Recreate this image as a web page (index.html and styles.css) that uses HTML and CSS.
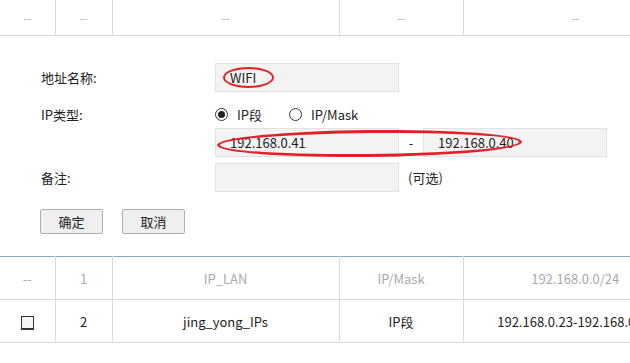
FILE: index.html
```html
<!DOCTYPE html>
<html lang="zh-CN">
<head>
  <meta charset="UTF-8" />
  <title>地址管理</title>
  <link rel="stylesheet" href="styles.css">
</head>
<body>
  <table class="grid top-grid">
    <colgroup>
      <col class="c1"><col class="c2"><col class="c3"><col class="c4"><col class="c5">
    </colgroup>
    <tr class="dim">
      <td>--</td><td>--</td><td>--</td><td>--</td><td>--</td>
    </tr>
  </table>

  <div class="form">
    <div class="row row-name">
      <span class="label">地址名称:</span>
      <div class="field"><span class="mark mark-name"></span>WIFI</div>
    </div>

    <div class="row row-type">
      <span class="label">IP类型:</span>
      <label class="radio"><span class="dot checked"></span>IP段</label>
      <label class="radio"><span class="dot"></span>IP/Mask</label>
    </div>

    <div class="row row-ip">
      <span class="label"></span>
      <div class="field">192.168.0.41</div>
      <span class="sep">-</span>
      <div class="field">192.168.0.40</div>
      <span class="mark mark-ip"></span>
    </div>

    <div class="row row-note">
      <span class="label">备注:</span>
      <div class="field"></div>
      <span class="hint">(可选)</span>
    </div>

    <div class="actions">
      <button>确定</button>
      <button>取消</button>
    </div>
  </div>

  <table class="grid list">
    <colgroup>
      <col class="c1"><col class="c2"><col class="c3"><col class="c4"><col class="c5">
    </colgroup>
    <tr class="dim">
      <td>--</td><td>1</td><td>IP_LAN</td><td>IP/Mask</td><td>192.168.0.0/24</td>
    </tr>
    <tr>
      <td><span class="check"></span></td>
      <td>2</td>
      <td>jing_yong_IPs</td>
      <td>IP段</td>
      <td>192.168.0.23-192.168.0.40</td>
    </tr>
  </table>
</body>
</html>
```

FILE: styles.css
```css
body {
  margin: 0;
  width: 630px;
  height: 363px;
  overflow: hidden;
  font-family: "Noto Sans CJK SC", "DejaVu Sans", sans-serif;
  font-size: 13px;
  color: #222;
  background: #fff;
}

.grid {
  width: 687px;
  border-collapse: collapse;
  table-layout: fixed;
}

.grid .c1 { width: 55px; }
.grid .c2 { width: 57px; }
.grid .c3 { width: 227px; }
.grid .c4 { width: 124px; }
.grid .c5 { width: 224px; }

.grid td {
  padding: 0;
  text-align: center;
  white-space: nowrap;
  overflow: hidden;
  border-left: 1px solid #d9d9d9;
  border-bottom: 1px solid #d9d9d9;
}

.grid td:first-child {
  border-left: none;
}

.top-grid td {
  height: 35px;
  font-size: 11px;
}

.dim td {
  color: #aaa;
}

.list {
  border-top: 1px solid #8ea7c1;
}

.list td {
  height: 42px;
}

.check {
  display: inline-block;
  width: 11px;
  height: 11px;
  vertical-align: middle;
  background: #f6f6f6;
  border: 1px solid #333;
  border-bottom-width: 2px;
}

.form {
  padding: 27px 0 22px 41px;
}

.row {
  display: flex;
  align-items: center;
  height: 29px;
  position: relative;
}

.row .label {
  width: 174px;
  flex: none;
}

.row-type {
  height: 28px;
  padding-top: 8px;
}

.row-note {
  margin-top: 6px;
}

.field {
  position: relative;
  box-sizing: border-box;
  width: 184px;
  height: 29px;
  line-height: 27px;
  padding-left: 14px;
  background: #f3f3f3;
  border: 1px solid #e2e2e2;
}

.sep {
  width: 24px;
  text-align: center;
}

.hint {
  margin-left: 9px;
}

.radio {
  display: flex;
  align-items: center;
  margin-right: 27px;
}

.dot {
  box-sizing: border-box;
  width: 13px;
  height: 13px;
  margin-right: 9px;
  border: 1px solid #333;
  border-radius: 50%;
  position: relative;
}

.dot.checked::after {
  content: "";
  position: absolute;
  left: 2px;
  top: 2px;
  width: 7px;
  height: 7px;
  border-radius: 50%;
  background: #222;
}

.actions {
  display: flex;
  gap: 19px;
  margin-top: 17px;
  margin-left: -1px;
}

.actions button {
  width: 63px;
  height: 25px;
  padding: 0;
  font-family: inherit;
  font-size: 13px;
  color: #222;
  background: #efefef;
  border: 1px solid #adadad;
  border-radius: 2px;
}

/* red hand-drawn annotation rings */
.mark {
  position: absolute;
  border: 2px solid #e41f26;
  border-radius: 50%;
}

.mark-name {
  left: 7px;
  top: 3px;
  width: 47px;
  height: 17px;
}

.mark-ip {
  left: 176px;
  top: 2px;
  width: 299px;
  height: 21px;
  border-width: 3px;
  transform: rotate(-0.6deg);
}
```
